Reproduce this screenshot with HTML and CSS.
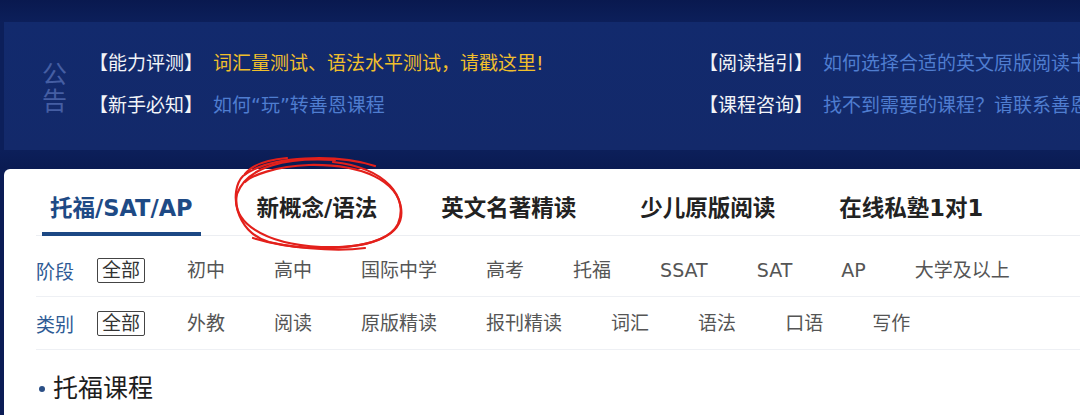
FILE: index.html
```html
<!doctype html>
<html lang="zh-CN">
  <head>
    <meta charset="UTF-8" />
    <meta name="viewport" content="width=device-width, initial-scale=1.0" />
    <title>课程中心</title>
    <link rel="stylesheet" href="styles.css">
  </head>
  <body>
    <div class="header">
      <div class="notice">
        <div class="notice-label">公<br>告</div>
        <div class="notice-grid">
          <div class="notice-item">
            <span class="tag">【能力评测】</span>
            <a class="link yellow" href="#">词汇量测试、语法水平测试，请戳这里!</a>
          </div>
          <div class="notice-item">
            <span class="tag">【阅读指引】</span>
            <a class="link" href="#">如何选择合适的英文原版阅读书籍？</a>
          </div>
          <div class="notice-item">
            <span class="tag">【新手必知】</span>
            <a class="link" href="#">如何“玩”转善恩课程</a>
          </div>
          <div class="notice-item">
            <span class="tag">【课程咨询】</span>
            <a class="link" href="#">找不到需要的课程？请联系善恩老师</a>
          </div>
        </div>
      </div>
    </div>

    <div class="card">
      <div class="tabs">
        <a class="tab active" href="#">托福/SAT/AP</a>
        <a class="tab" href="#">新概念/语法</a>
        <a class="tab" href="#">英文名著精读</a>
        <a class="tab" href="#">少儿原版阅读</a>
        <a class="tab" href="#">在线私塾1对1</a>
      </div>

      <div class="filters">
        <div class="filter-row">
          <span class="filter-label">阶段</span>
          <span class="filter-item selected">全部</span>
          <span class="filter-item">初中</span>
          <span class="filter-item">高中</span>
          <span class="filter-item">国际中学</span>
          <span class="filter-item">高考</span>
          <span class="filter-item">托福</span>
          <span class="filter-item">SSAT</span>
          <span class="filter-item">SAT</span>
          <span class="filter-item">AP</span>
          <span class="filter-item">大学及以上</span>
        </div>
        <div class="filter-row">
          <span class="filter-label">类别</span>
          <span class="filter-item selected">全部</span>
          <span class="filter-item">外教</span>
          <span class="filter-item">阅读</span>
          <span class="filter-item">原版精读</span>
          <span class="filter-item">报刊精读</span>
          <span class="filter-item">词汇</span>
          <span class="filter-item">语法</span>
          <span class="filter-item">口语</span>
          <span class="filter-item">写作</span>
        </div>
      </div>

      <h2 class="section-title">托福课程</h2>
    </div>

    <!-- hand-drawn red circle annotation -->
    <svg class="scribble" width="190" height="104" viewBox="0 0 190 104">
      <path d="M150 14 C112 2, 45 3, 18 24 C4 38, 9 80, 44 90 C90 101, 160 98, 173 72 C184 46, 162 16, 108 10" />
      <path d="M110 8 C62 5, 22 14, 12 42 C6 70, 38 92, 96 95 C150 97, 180 82, 176 56 C172 30, 140 12, 84 13 C50 14, 26 24, 20 30" />
      <path d="M28 86 C60 96, 110 100, 140 96 M20 22 C26 14, 40 8, 62 6" />
    </svg>
  </body>
</html>
```

FILE: styles.css
```css
body {
  margin: 0;
  width: 1080px;
  height: 415px;
  overflow: hidden;
  position: relative;
  background: #0b1c55;
  font-family: "DejaVu Sans", "Noto Sans CJK SC", sans-serif;
}
a {
  text-decoration: none;
}

.header {
  padding: 22px 0 19px 4px;
  background: linear-gradient(#09194f, #0c1f5a 22px, #0c1f5a 150px, #0a1b52);
}
.notice {
  display: flex;
  align-items: center;
  height: 128px;
  background: linear-gradient(#122a6d, #13296a);
  white-space: nowrap;
  overflow: hidden;
}
.notice-label {
  width: 26px;
  margin: 4px 0 0 38px;
  font-size: 25px;
  line-height: 27px;
  color: #455ea3;
}
.notice-grid {
  display: grid;
  grid-template-columns: 610px auto;
  row-gap: 20px;
  margin-left: 22px;
  margin-top: -4px;
}
.notice-item {
  font-size: 19px;
  line-height: 22px;
}
.tag {
  color: #f2f4f8;
  margin-right: 4px;
}
.link {
  color: #4f7dd0;
}
.link.yellow {
  color: #f0bf2c;
}

.card {
  margin-left: 4px;
  height: 246px;
  padding: 0 0 0 32px;
  background: #fff;
  border-top-left-radius: 6px;
}
.tabs {
  display: flex;
  gap: 48px;
  padding: 15px 0 0 6px;
  border-bottom: 1px solid #eceef2;
}
.tab {
  padding: 0 8px;
  font-size: 22.5px;
  font-weight: bold;
  line-height: 48px;
  color: #222;
  border-bottom: 4px solid transparent;
  margin-bottom: -1px;
}
.tab.active {
  color: #1e4a85;
  border-bottom-color: #1c4884;
}

.filters {
  padding-top: 8px;
}
.filter-row {
  display: flex;
  align-items: center;
  height: 52px;
  border-bottom: 1px solid #eef0f4;
  font-size: 19px;
}
.filter-label {
  color: #2e5b95;
  margin-right: 23px;
}
.filter-item {
  color: #555;
  margin-right: 49px;
  line-height: 23px;
}
.filter-item.selected {
  color: #333;
  padding: 0 4px;
  border: 1.5px solid #444;
  border-radius: 2px;
  margin-right: 42px;
}

.section-title {
  display: flex;
  align-items: center;
  margin: 24px 0 0 3px;
  font-size: 25px;
  font-weight: normal;
  line-height: 30px;
  color: #1d1d1d;
}
.section-title::before {
  content: "";
  width: 6px;
  height: 6px;
  margin-right: 8px;
  border-radius: 50%;
  background: #2b4f86;
}

.scribble {
  position: absolute;
  left: 225px;
  top: 152px;
}
.scribble path {
  fill: none;
  stroke: #e3201b;
  stroke-width: 2.2;
  stroke-linecap: round;
}
```
